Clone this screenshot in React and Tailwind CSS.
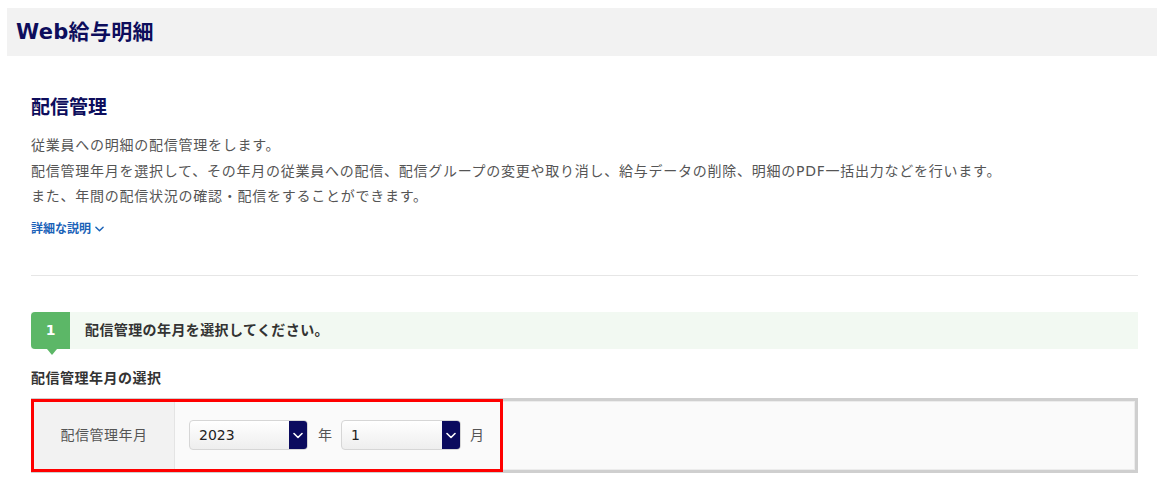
import React from 'react';

const FONT = { fontFamily: '"DejaVu Sans", "Noto Sans CJK JP", sans-serif' };

function Chevron({ className = '', color = '#fff' }) {
  return (
    <svg viewBox="0 0 10 6" className={className} fill="none">
      <path d="M1 1l4 4 4-4" stroke={color} strokeWidth="1.6" strokeLinecap="round" strokeLinejoin="round" />
    </svg>
  );
}

function Select({ value, width }) {
  return (
    <div className={`flex h-[30px] ${width} rounded-[4px] border border-[#d6d6d6] bg-gradient-to-b from-white to-[#eeeeee] overflow-hidden`}>
      <div className="flex-1 flex items-center pl-[9px] text-[14px] text-[#222]">{value}</div>
      <div className="w-[18px] bg-[#0b0b5e] flex items-center justify-center">
        <Chevron className="w-[10px] h-[7px]" />
      </div>
    </div>
  );
}

export default function App() {
  return (
    <div className="min-h-screen bg-white pt-[8px]" style={FONT}>
      {/* Header */}
      <header className="ml-[7px] mr-[3px] h-[48px] bg-[#f2f2f2] flex items-center pl-[9px]">
        <h1 className="text-[21px] tracking-[0.3px] font-bold text-[#0d0d5c] leading-none">Web給与明細</h1>
      </header>

      <main className="pl-[31px] pr-[22px]">
        <h2 className="mt-[37px] text-[19px] leading-[28px] font-bold text-[#0d0d5c]">配信管理</h2>

        <div className="mt-[12px] text-[14px] leading-[25.5px] tracking-[0.75px] text-[#555]">
          <p>従業員への明細の配信管理をします。</p>
          <p>配信管理年月を選択して、その年月の従業員への配信、配信グループの変更や取り消し、給与データの削除、明細のPDF一括出力などを行います。</p>
          <p>また、年間の配信状況の確認・配信をすることができます。</p>
        </div>

        <button className="mt-[9px] flex items-center gap-[4px] h-[20px] text-[12px] font-bold text-[#1a62b8]">
          詳細な説明
          <Chevron className="w-[9px] h-[6px]" color="#1a62b8" />
        </button>

        <div className="mt-[36px] h-px bg-[#e6e6e6]" />

        {/* Step */}
        <div className="mt-[36px] relative flex h-[37px] bg-[#f2f9f2]">
          <div className="w-[39px] rounded-l-[4px] bg-[#5cb767] flex items-center justify-center text-white text-[14px] font-bold">1</div>
          <div className="absolute left-[16px] top-full w-0 h-0 border-x-[5px] border-x-transparent border-t-[6px] border-t-[#5cb767]" />
          <div className="flex items-center pl-[15px] text-[14px] tracking-[0.4px] font-bold text-[#333]">配信管理の年月を選択してください。</div>
        </div>

        <h3 className="mt-[19px] text-[14px] leading-[20px] tracking-[0.5px] font-bold text-[#333]">配信管理年月の選択</h3>

        {/* Table */}
        <div className="relative mt-[10px]">
          <div className="flex h-[75px] border-[3px] border-[#cfcfcf]">
            <div className="w-[141px] bg-[#f2f2f2] border-r border-[#e4e4e4] flex items-center justify-center text-[14px] tracking-[0.5px] text-[#555]">
              配信管理年月
            </div>
            <div className="flex-1 bg-[#fafafa] border border-l-0 border-[#ececec] flex items-center pl-[14px] text-[14px] text-[#555]">
              <Select value="2023" width="w-[119px]" />
              <span className="ml-[10px] mr-[9px]">年</span>
              <Select value="1" width="w-[120px]" />
              <span className="ml-[9px]">月</span>
            </div>
          </div>
          <div className="absolute left-0 top-[1px] w-[472px] h-[73px] border-[3px] border-[#ff0000] pointer-events-none" />
        </div>
      </main>
    </div>
  );
}
